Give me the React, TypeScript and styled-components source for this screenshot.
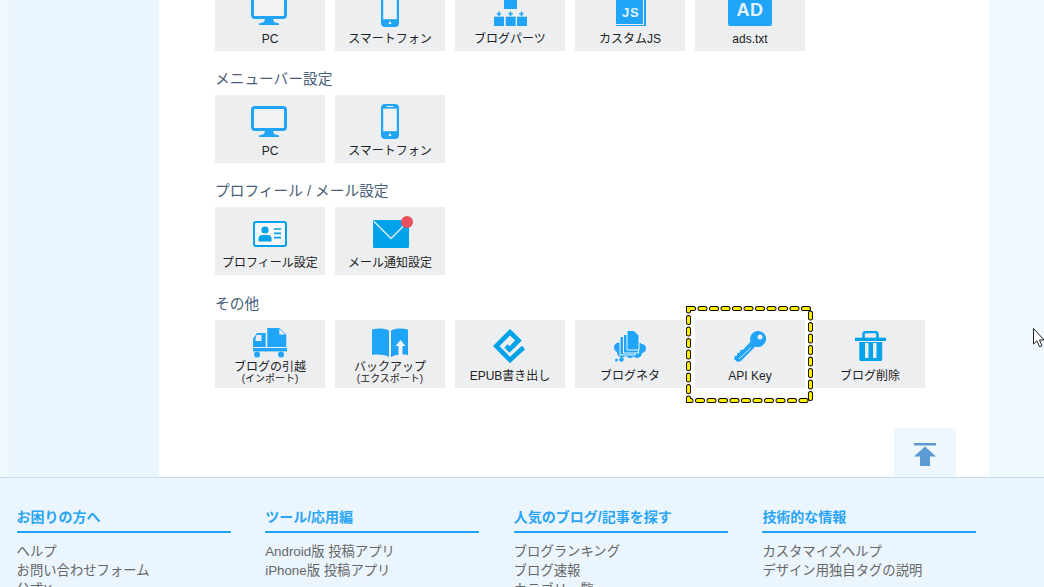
import React from "react";
import styled, { createGlobalStyle } from "styled-components";

const BLUE = "#20a4f7";
const CYAN = "#00a2ea";
const PANEL = "#edeef0";

const MonitorIcon = () => (
  <svg width="38" height="31" viewBox="0 0 38 31">
    <rect x="1.5" y="1.5" width="33" height="22" rx="2.5" fill="#f1f2f4" stroke={BLUE} strokeWidth="3" />
    <path d="M14 25h8l1 3 5 1.6V31H8v-1.4l5-1.6z" fill={BLUE} />
  </svg>
);

const PhoneIcon = () => (
  <svg width="18" height="35" viewBox="0 0 18 35">
    <rect width="18" height="35" rx="4" fill={BLUE} />
    <rect x="2.2" y="4.6" width="13.6" height="22.6" fill="#f1f2f4" />
    <rect x="5.5" y="2" width="7" height="1" fill="#f1f2f4" />
    <circle cx="9" cy="31" r="1.3" fill="#f1f2f4" />
  </svg>
);

const PartsIcon = () => (
  <svg width="33" height="33" viewBox="0 0 33 33" fill={BLUE}>
    <rect x="10" width="13" height="16" />
    <rect y="23.7" width="10" height="9.3" />
    <rect x="11.7" y="23.7" width="10" height="9.3" />
    <rect x="23" y="23.7" width="10" height="9.3" />
    <path d="M4.2 18.6h1.6v1.6h1.6v1.4H5.800v1.600H4.200v-1.600H2.600v-1.400h1.600zM15.700 18.600h1.600v1.600h1.600v1.400h-1.600v1.600h-1.600v-1.600h-1.600v-1.400h1.600zM26.700 18.600h1.600v1.600h1.600v1.400h-1.600v1.600h-1.600v-1.600h-1.600v-1.400h1.600z" />
  </svg>
);

const JsIcon = () => (
  <svg width="32" height="34" viewBox="-2 0 32 34">
    <path d="M0 0h20l7 7v25H0z" fill={BLUE} />
    <path d="M28 8h2v26H0v-1h28z" fill={BLUE} />
    <IconText x="6" y="24.500" fontSize="13" letterSpacing="0.800" fill="#e4f2fc">
      JS
    </IconText>
  </svg>
);

const AdIcon = () => (
  <svg width="44" height="34" viewBox="0 0 44 34">
    <rect width="44" height="34" rx="2" fill={BLUE} />
    <IconText x="8.500" y="24" fontSize="18" letterSpacing="0.500" fill="#e4f2fc">
      AD
    </IconText>
  </svg>
);

const ProfileIcon = () => (
  <svg width="34" height="26" viewBox="0 0 34 26">
    <rect x="1" y="1" width="32" height="24" rx="2" fill="#f6f7f8" stroke={CYAN} strokeWidth="2" />
    <circle cx="12" cy="9" r="3.600" fill={CYAN} />
    <path d="M5.500 20.500v-3c0-2.500 2-3.500 3.500-3.500h6c1.500 0 3.500 1 3.500 3.500v3z" fill={CYAN} />
    <path d="M21 8h7M21 12.300h7M21 16.600h7" stroke={CYAN} strokeWidth="1.700" />
  </svg>
);

const MailIcon = () => (
  <MailWrap>
    <svg width="36" height="28" viewBox="0 0 36 28">
      <rect width="36" height="28" rx="1.500" fill={CYAN} />
      <path d="M1 1.500l17 17 17-17" fill="none" stroke="#d7eefb" strokeWidth="1.500" />
    </svg>
    <Badge />
  </MailWrap>
);

const TruckIcon = () => (
  <svg width="34" height="30" viewBox="0 0 34 30" fill={BLUE}>
    <path d="M4 5h8.700v14H0v-8z" />
    <path d="M3.500 7h5v6H2.500v-2z" fill="#edeef0" />
    <path d="M14.300 0h12l7 6.500V19H14.300z" />
    <path d="M26.300 0.800l6.200 5.800h-6.200z" fill="#edeef0" />
    <rect y="20" width="34" height="3.400" />
    <circle cx="4" cy="26.500" r="3" />
    <circle cx="28" cy="26.500" r="3" />
  </svg>
);

const BookIcon = () => (
  <svg width="36" height="29" viewBox="0 0 36 29">
    <path d="M0 1.500C6 .2 12 .2 17 2.500V29C12 26.500 6 26 0 27z" fill={BLUE} />
    <path d="M19 2.500C24 .2 30 .2 36 1.500V27C30 26 24 26.500 19 29z" fill={BLUE} />
    <path d="M28.500 12l5 6h-3v11h-4V18h-3z" fill="#f1f2f4" />
  </svg>
);

const EpubIcon = () => (
  <svg width="34" height="34" viewBox="0 0 34 34">
    <path
      d="M30.500 18.500L17 31 3.200 17 17 3.200 25.500 11.500 16.500 20.500 13 17"
      fill="none"
      stroke={CYAN}
      strokeWidth="4.600"
    />
  </svg>
);

const NetaIcon = () => (
  <svg width="32" height="32" viewBox="0 0 32 32" fill={BLUE}>
    <circle cx="5" cy="17.500" r="5" />
    <circle cx="8" cy="22.500" r="5" />
    <circle cx="16" cy="23" r="5" />
    <circle cx="23" cy="23" r="5" />
    <circle cx="27.500" cy="18.500" r="4.500" />
    <rect x="5" y="13" width="22" height="10" />
    <circle cx="2.500" cy="30" r="1.500" />
    <circle cx="7.500" cy="29.500" r="2.200" />
    <rect x="6" y="6.500" width="15" height="18.500" fill={BLUE} stroke="#edf6fd" strokeWidth="1" />
    <rect x="9.500" y="4.500" width="15" height="18.500" fill={BLUE} stroke="#edf6fd" strokeWidth="1" />
    <path d="M13 .5h7l5 5V20H13z" fill={BLUE} stroke="#edf6fd" strokeWidth="1" />
  </svg>
);

const KeyIcon = () => (
  <svg width="32" height="31" viewBox="0 0 32 31">
    <path
      d="M24 0a8 8 0 1 1-2.700 15.500L7 30l-3.500 1L0 28l1-3 2-.5.300-2.500 2.700-.500.300-2.500 2.700-.300L14 13.500 16.500 10.500A8 8 0 0 1 24 0z"
      fill={BLUE}
    />
    <circle cx="26" cy="6" r="2.500" fill="#e8eef3" />
    <path d="M5 28L17 16.500" stroke="#d5ebfa" strokeWidth="1" />
  </svg>
);

const TrashIcon = () => (
  <svg width="31" height="30" viewBox="0 0 31 30" fill={CYAN}>
    <path d="M8.500 7V3.500C8.500 2 9.500 1 11 1h9c1.500 0 2.500 1 2.500 2.500V7" fill="none" stroke={CYAN} strokeWidth="2.600" />
    <rect y="6.700" width="31" height="3.300" />
    <path d="M4.300 11h22.900v17.500c0 .8-.7 1.500-1.500 1.500H5.800c-.8 0-1.500-.7-1.500-1.500z" />
    <rect x="10" y="12" width="3.500" height="15" fill={PANEL} />
    <rect x="18" y="12" width="3.500" height="15" fill={PANEL} />
  </svg>
);

const ToTopIcon = () => (
  <svg width="22" height="23" viewBox="0 0 22 23" fill="#5b9bd1">
    <rect width="22" height="2.500" />
    <path d="M11 3.500L22 13.500H16V23H6V13.500H0z" />
  </svg>
);

type Item = {
  name: string;
  sub?: string;
  icon: React.ReactNode;
};

type Section = {
  title?: string;
  items: Item[];
};

const sections: Section[] = [
  {
    items: [
      { name: "PC", icon: <MonitorIcon /> },
      { name: "スマートフォン", icon: <PhoneIcon /> },
      { name: "ブログパーツ", icon: <PartsIcon /> },
      { name: "カスタムJS", icon: <JsIcon /> },
      { name: "ads.txt", icon: <AdIcon /> },
    ],
  },
  {
    title: "メニューバー設定",
    items: [
      { name: "PC", icon: <MonitorIcon /> },
      { name: "スマートフォン", icon: <PhoneIcon /> },
    ],
  },
  {
    title: "プロフィール / メール設定",
    items: [
      { name: "プロフィール設定", icon: <ProfileIcon /> },
      { name: "メール通知設定", icon: <MailIcon /> },
    ],
  },
  {
    title: "その他",
    items: [
      { name: "ブログの引越", sub: "(インポート)", icon: <TruckIcon /> },
      { name: "バックアップ", sub: "(エクスポート)", icon: <BookIcon /> },
      { name: "EPUB書き出し", icon: <EpubIcon /> },
      { name: "ブログネタ", icon: <NetaIcon /> },
      { name: "API Key", icon: <KeyIcon /> },
      { name: "ブログ削除", icon: <TrashIcon /> },
    ],
  },
];

const footerColumns = [
  { title: "お困りの方へ", links: ["ヘルプ", "お問い合わせフォーム", "公式X"] },
  { title: "ツール/応用編", links: ["Android版 投稿アプリ", "iPhone版 投稿アプリ"] },
  { title: "人気のブログ/記事を探す", links: ["ブログランキング", "ブログ速報", "カテゴリー覧"] },
  { title: "技術的な情報", links: ["カスタマイズヘルプ", "デザイン用独自タグの説明"] },
];

const App = () => {
  return (
    <Page>
      <GlobalStyle />
      <Main>
        <SideBand />
        <Content>
          <Sections>
            {sections.map((section, i) => (
              <div key={i}>
                {section.title && <SectionTitle>{section.title}</SectionTitle>}
                <CardRow>
                  {section.items.map((item) => (
                    <Card key={item.name + i}>
                      <IconSlot $twoLine={!!item.sub}>{item.icon}</IconSlot>
                      <CardName $twoLine={!!item.sub}>{item.name}</CardName>
                      {item.sub && <CardSub>{item.sub}</CardSub>}
                    </Card>
                  ))}
                </CardRow>
              </div>
            ))}
          </Sections>
          <ToTop>
            <ToTopIcon />
          </ToTop>
        </Content>
      </Main>
      <Footer>
        {footerColumns.map((col) => (
          <FooterColumn key={col.title}>
            <FooterTitle>{col.title}</FooterTitle>
            {col.links.map((link) => (
              <FooterLink key={link}>{link}</FooterLink>
            ))}
          </FooterColumn>
        ))}
      </Footer>
      <FocusRing width="128" height="97" viewBox="0 0 128 97">
        <rect x="2.500" y="2.500" width="122" height="92" fill="none" stroke="#000" strokeWidth="5" strokeLinecap="round" strokeDasharray="5 6.500" />
        <rect x="2.500" y="2.500" width="122" height="92" fill="none" stroke="#ffee00" strokeWidth="3.200" strokeLinecap="round" strokeDasharray="5 6.500" />
      </FocusRing>
      <Cursor width="12" height="20" viewBox="0 0 12 20">
        <path d="M.5.500V16L4 12.800 6.500 18.800 9 17.700 6.500 12H11z" fill="#fff" stroke="#222" strokeWidth="1" />
      </Cursor>
    </Page>
  );
};

const GlobalStyle = createGlobalStyle`
  html, body {
    margin: 0;
    padding: 0;
    overflow: hidden;
    background: #f0f9fe;
  }
  body {
    font-family: "Liberation Sans", "Noto Sans CJK JP", sans-serif;
  }
`;

const Page = styled.div`
  position: relative;
  display: flex;
  flex-direction: column;
  width: 1044px;
  height: 587px;
  overflow: hidden;
`;

const Main = styled.div`
  display: flex;
  flex: none;
  height: 477px;
  padding-left: 9px;
  background: #f0f9fe;
`;

const SideBand = styled.div`
  flex: none;
  width: 150px;
  background: #ebf5fe;
`;

const Content = styled.div`
  display: flex;
  flex-direction: column;
  flex: none;
  box-sizing: border-box;
  width: 830px;
  padding-left: 56px;
  background: #fff;
`;

const Sections = styled.div`
  display: flex;
  flex-direction: column;
  gap: 18.4px;
  margin-top: -17.4px;
`;

const SectionTitle = styled.div`
  height: 21px;
  margin-bottom: 5px;
  font-size: 14.7px;
  line-height: 21px;
  color: #48607a;
`;

const CardRow = styled.div`
  display: flex;
  gap: 10px;
`;

const Card = styled.div`
  display: flex;
  flex-direction: column;
  align-items: center;
  flex: none;
  width: 110px;
  height: 68px;
  background: ${PANEL};
  color: #222;
`;

const IconSlot = styled.div<{ $twoLine: boolean }>`
  display: flex;
  align-items: center;
  justify-content: center;
  flex: none;
  box-sizing: border-box;
  height: ${(p) => (p.$twoLine ? "40px" : "49px")};
  padding-top: ${(p) => (p.$twoLine ? "6px" : "4px")};
`;

const CardName = styled.div<{ $twoLine: boolean }>`
  font-size: 12px;
  line-height: ${(p) => (p.$twoLine ? "14px" : "15px")};
  white-space: nowrap;
`;

const CardSub = styled.div`
  font-size: 10px;
  line-height: 10px;
  white-space: nowrap;
`;

const IconText = styled.text`
  font-family: "Liberation Sans", sans-serif;
  font-weight: 700;
`;

const MailWrap = styled.div`
  position: relative;
  display: flex;
  margin: 1px 0 0 1px;
`;

const Badge = styled.span`
  position: absolute;
  top: -4px;
  right: -4px;
  width: 12px;
  height: 12px;
  border-radius: 50%;
  background: #e8505b;
`;

const ToTop = styled.div`
  display: flex;
  justify-content: center;
  align-self: flex-end;
  flex: none;
  box-sizing: border-box;
  width: 62px;
  height: 49px;
  margin-top: auto;
  margin-right: 33px;
  padding-top: 15px;
  border-radius: 3px 3px 0 0;
  background: #eef6fe;
`;

const Footer = styled.footer`
  display: flex;
  flex: 1;
  gap: 34.6px;
  padding: 29px 0 0 16.6px;
  border-top: 1px solid #c5dcec;
  background: #ebf5fe;
`;

const FooterColumn = styled.div`
  flex: none;
  width: 214px;
`;

const FooterTitle = styled.div`
  height: 24px;
  margin-bottom: 9px;
  border-bottom: 2px solid #20a4f7;
  font-size: 14px;
  font-weight: 700;
  line-height: 20px;
  color: #2aa5f5;
`;

const FooterLink = styled.div`
  font-size: 13.33px;
  line-height: 19px;
  color: #666;
  white-space: nowrap;
`;

const FocusRing = styled.svg`
  position: absolute;
  top: 305.500px;
  left: 686px;
`;

const Cursor = styled.svg`
  position: absolute;
  top: 328px;
  left: 1033px;
`;

export default App;
